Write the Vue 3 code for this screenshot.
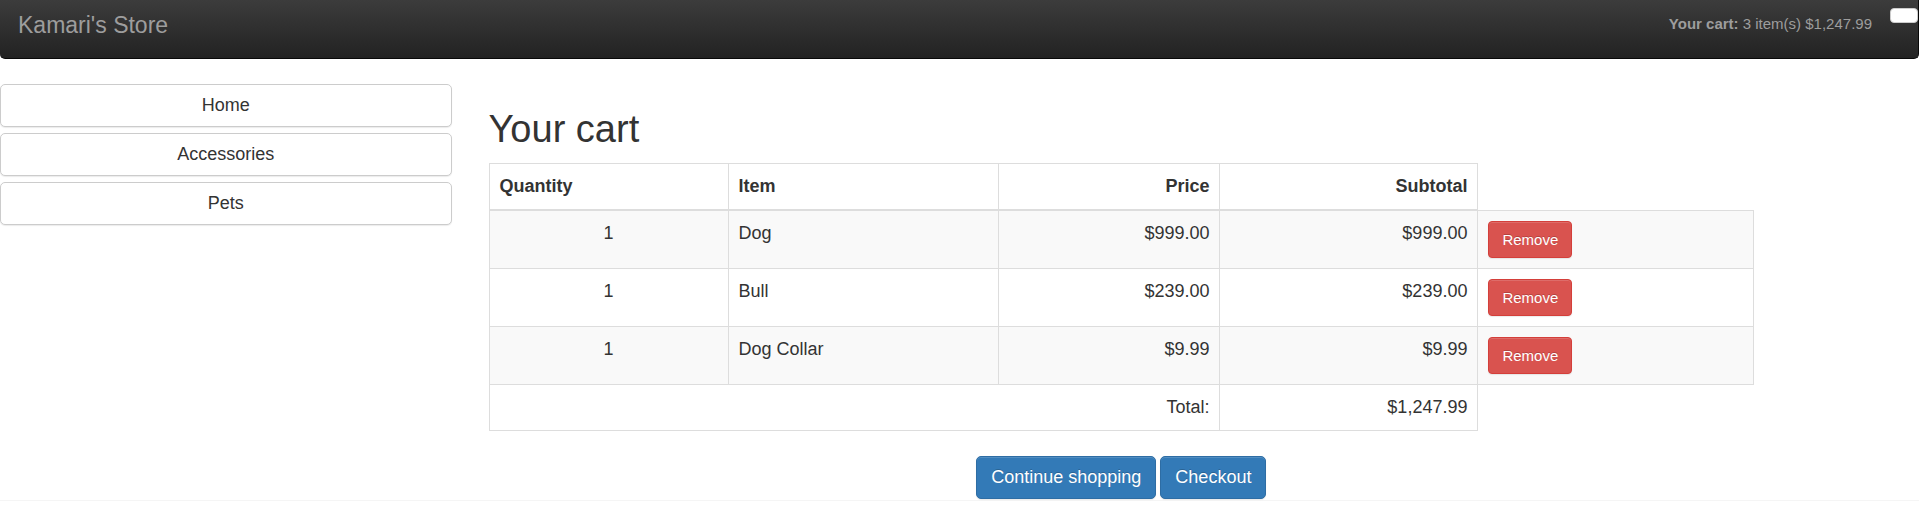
<script setup>
const storeName = "Kamari's Store"
const categories = ['Home', 'Accessories', 'Pets']
const lines = [
  { quantity: 1, name: 'Dog', price: 999 },
  { quantity: 1, name: 'Bull', price: 239 },
  { quantity: 1, name: 'Dog Collar', price: 9.99 }
]
const itemCount = lines.reduce((sum, l) => sum + l.quantity, 0)
const total = lines.reduce((sum, l) => sum + l.quantity * l.price, 0)
const money = (value) =>
  value.toLocaleString('en-US', { style: 'currency', currency: 'USD' })
</script>

<template>
  <div class="page">
    <header class="navbar">
      <a class="brand" href="#">{{ storeName }}</a>
      <div class="navbar-right">
        <p class="summary"><b>Your cart:</b> {{ itemCount }} item(s) {{ money(total) }}</p>
        <button class="cart-link" type="button" aria-label="Cart"></button>
      </div>
    </header>

    <div class="layout">
      <nav class="categories">
        <a v-for="category in categories" :key="category" class="btn btn-default" href="#">{{ category }}</a>
      </nav>

      <main class="content">
        <h2>Your cart</h2>
        <table class="cart">
          <colgroup>
            <col class="col-quantity" />
            <col class="col-item" />
            <col class="col-price" />
            <col class="col-subtotal" />
            <col />
          </colgroup>
          <thead>
            <tr>
              <th>Quantity</th>
              <th>Item</th>
              <th class="right">Price</th>
              <th class="right">Subtotal</th>
            </tr>
          </thead>
          <tbody>
            <tr v-for="line in lines" :key="line.name">
              <td class="center">{{ line.quantity }}</td>
              <td>{{ line.name }}</td>
              <td class="right">{{ money(line.price) }}</td>
              <td class="right">{{ money(line.quantity * line.price) }}</td>
              <td><button class="btn btn-danger" type="button">Remove</button></td>
            </tr>
          </tbody>
          <tfoot>
            <tr>
              <td class="right" colspan="3">Total:</td>
              <td class="right">{{ money(total) }}</td>
            </tr>
          </tfoot>
        </table>
        <div class="actions">
          <a class="btn btn-primary" href="#">Continue shopping</a>
          <a class="btn btn-primary" href="#">Checkout</a>
        </div>
      </main>
    </div>
    <hr class="divider" />
  </div>
</template>

<style>
body {
  margin: 0;
  background: #fff;
}
</style>

<style scoped>
.page {
  font-family: "Liberation Sans", Arial, Helvetica, sans-serif;
  font-size: 18px;
  line-height: 25px;
  color: #333;
}

.page *,
.page *::before {
  box-sizing: border-box;
}

.navbar {
  display: flex;
  justify-content: space-between;
  align-items: flex-start;
  min-height: 59px;
  margin-bottom: 25px;
  border: 1px solid #080808;
  border-width: 0 1px 1px 0;
  border-radius: 0 0 5px 5px;
  background: linear-gradient(to bottom, #3c3c3c, #222);
  color: #9d9d9d;
}

.brand {
  padding: 13px 18px;
  font-size: 23px;
  color: #9d9d9d;
  text-decoration: none;
}

.navbar-right {
  display: flex;
  align-items: flex-start;
  gap: 18px;
}

.summary {
  margin: 0;
  padding-top: 11px;
  font-size: 15px;
}

.cart-link {
  width: 28px;
  height: 15px;
  margin-top: 8px;
  padding: 0;
  border: 1px solid #ccc;
  border-radius: 4px;
  background: #fff;
}

.layout {
  display: grid;
  grid-template-columns: repeat(12, minmax(0, 1fr));
  column-gap: 37px;
  padding-right: 2px;
}

.categories {
  grid-column: span 3;
  display: flex;
  flex-direction: column;
  gap: 6px;
}

.content {
  grid-column: span 8;
}

h2 {
  margin: 25px 0 13px;
  font-size: 38px;
  font-weight: 500;
  line-height: 41px;
}

.btn {
  display: inline-block;
  padding: 8px 14px;
  border: 1px solid transparent;
  border-radius: 5px;
  font-family: inherit;
  font-size: 18px;
  line-height: 25px;
  text-align: center;
  text-decoration: none;
  cursor: pointer;
}

.btn-default {
  border-color: #ccc;
  background: #fff;
  box-shadow: 0 1px 1px rgba(0, 0, 0, 0.08);
  color: #333;
}

.btn-primary,
.btn-danger {
  box-shadow: inset 0 1px 0 rgba(255, 255, 255, 0.15), 0 1px 1px rgba(0, 0, 0, 0.08);
  color: #fff;
  text-shadow: 0 -1px 0 rgba(0, 0, 0, 0.2);
}

.btn-primary {
  border-color: #2e6da4;
  background: #337ab7;
}

.btn-danger {
  display: block;
  padding: 6px 13px;
  border-color: #d43f3a;
  border-radius: 4px;
  background: #d9534f;
  font-size: 15px;
  line-height: 23px;
}

.cart {
  width: 100%;
  margin-bottom: 25px;
  border-collapse: collapse;
  table-layout: fixed;
}

.col-quantity {
  width: 18.9%;
}

.col-item {
  width: 21.4%;
}

.col-price {
  width: 17.5%;
}

.col-subtotal {
  width: 20.4%;
}

th,
td {
  padding: 10px;
  border: 1px solid #ddd;
  text-align: left;
  vertical-align: top;
}

th {
  border-bottom-width: 2px;
}

tbody tr:nth-child(odd) {
  background: #f9f9f9;
}

.right {
  text-align: right;
}

.center {
  text-align: center;
}

.actions {
  display: flex;
  justify-content: center;
  gap: 4px;
}

.divider {
  height: 1px;
  margin: 1px 0 0;
  border: 0;
  background: #f5f5f5;
}
</style>
